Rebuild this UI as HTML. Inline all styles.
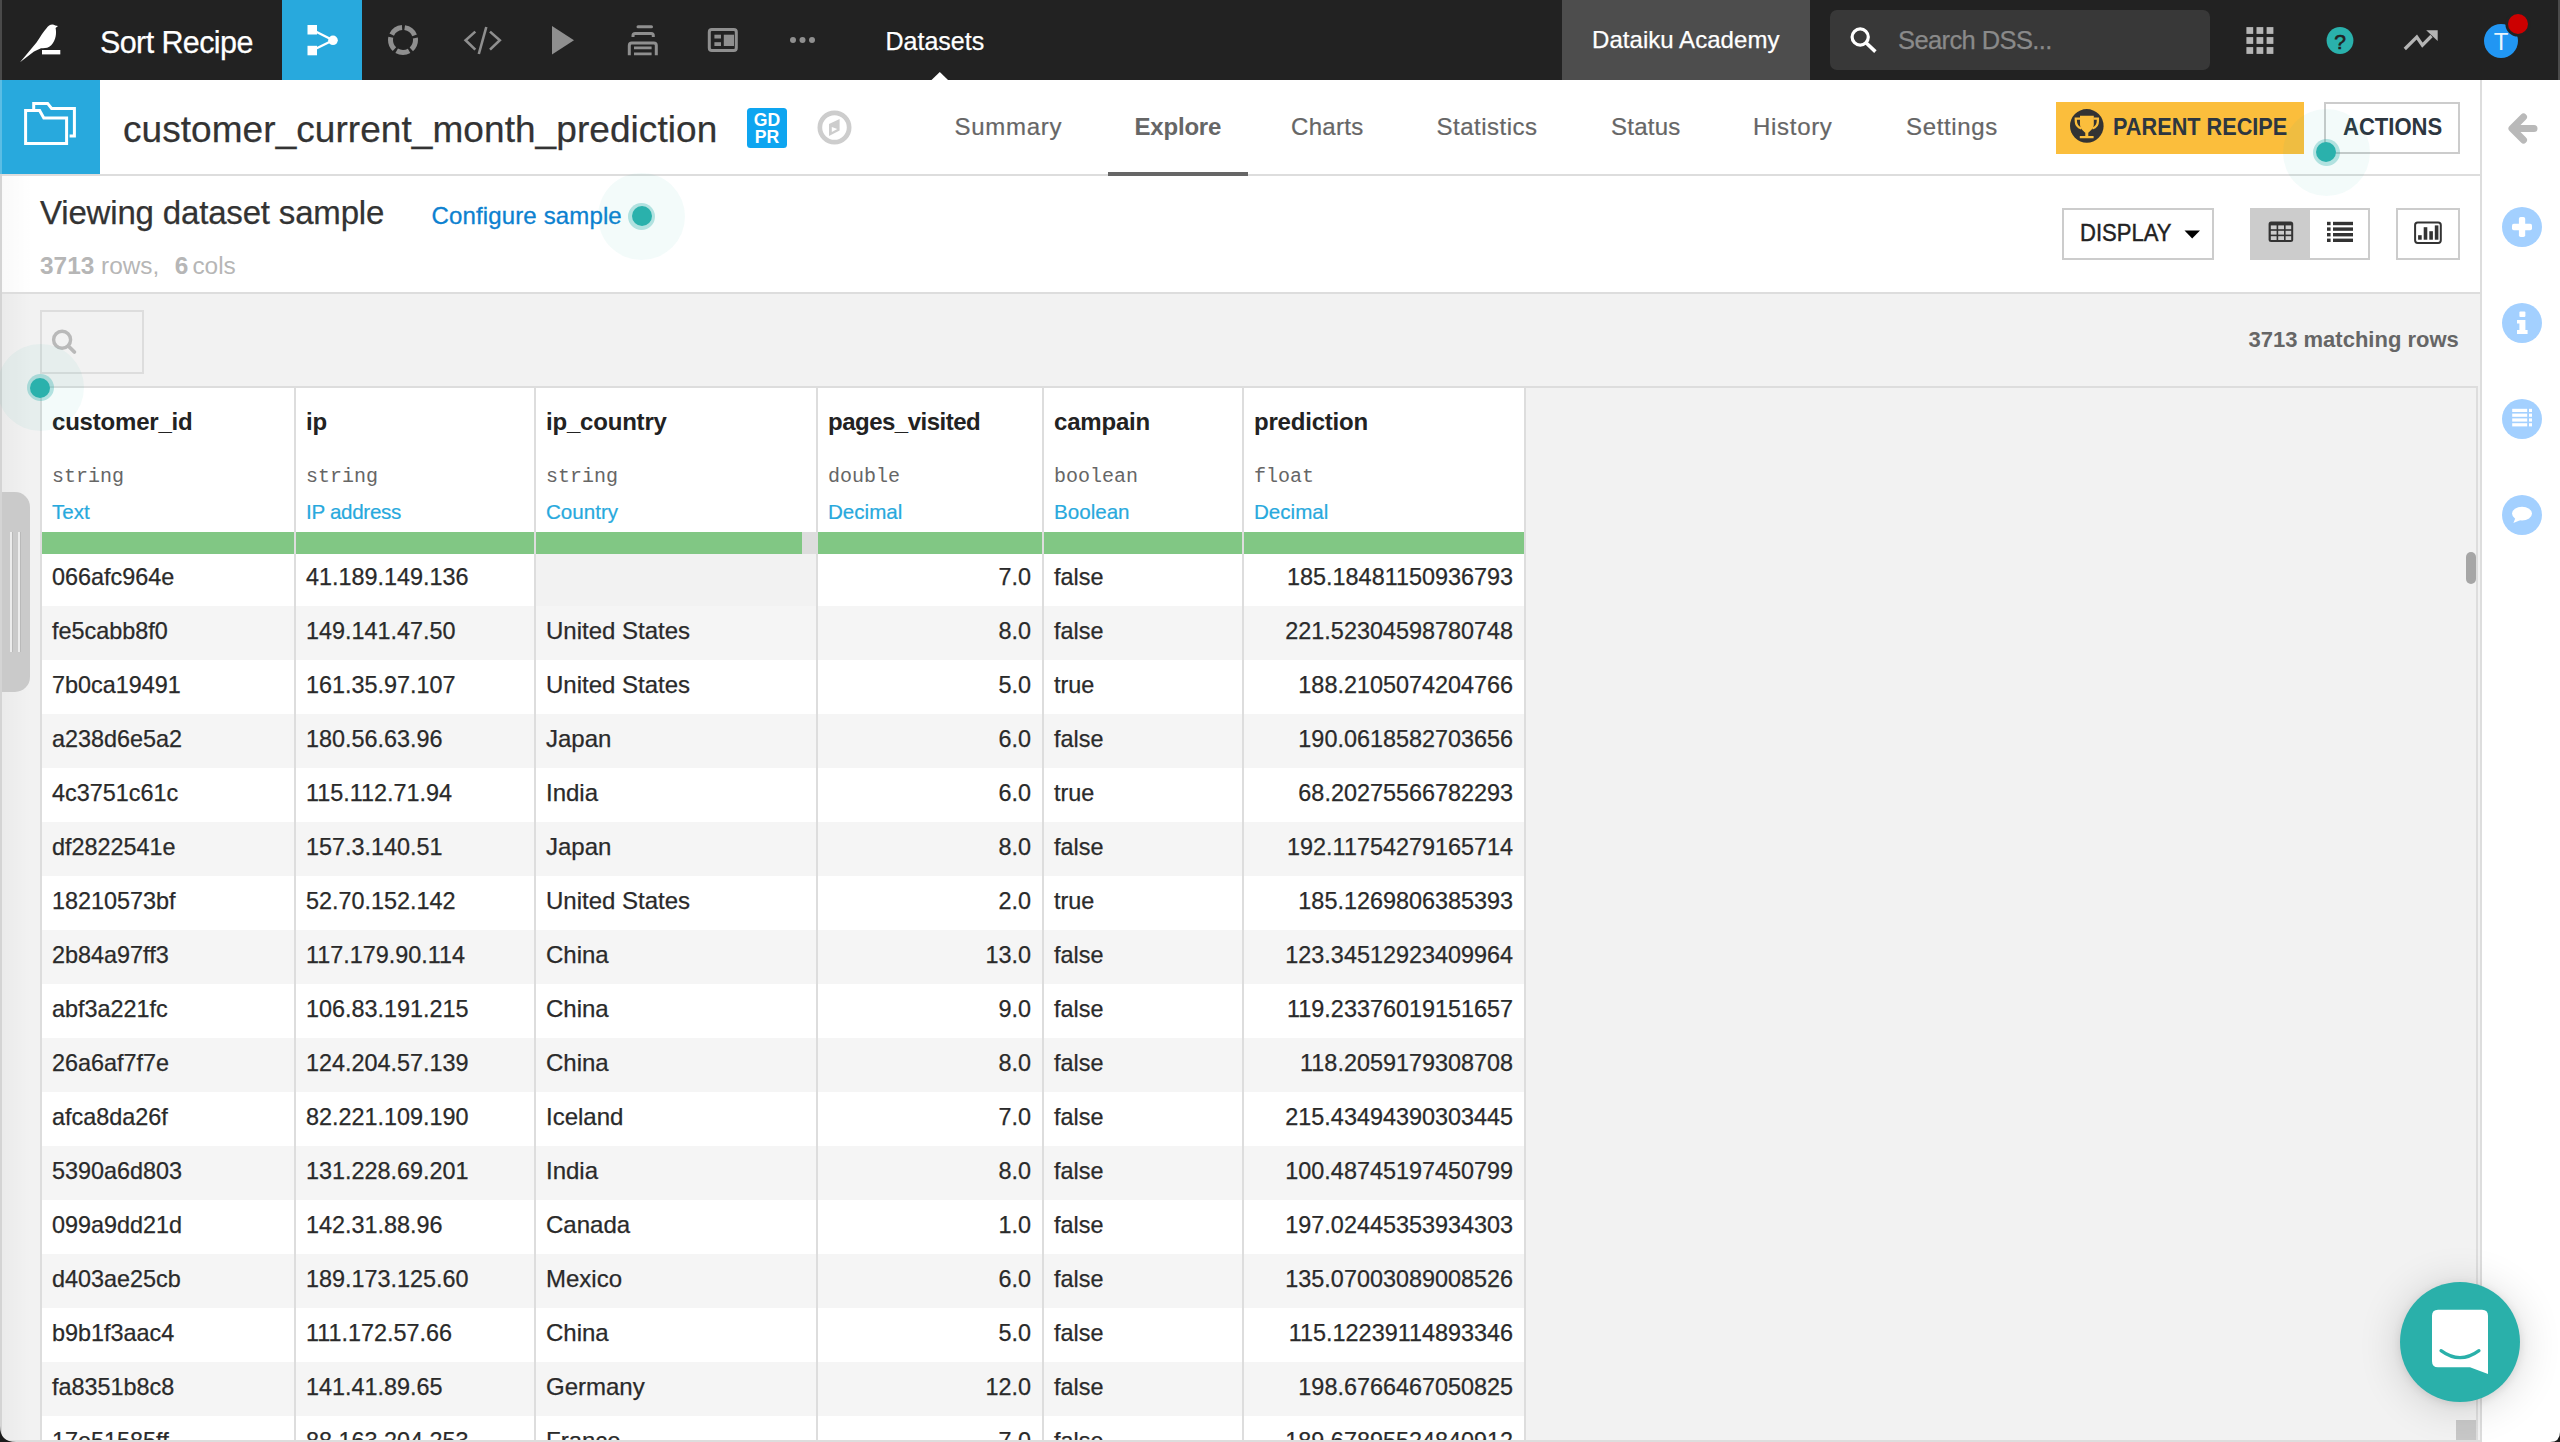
<!DOCTYPE html>
<html lang="en">
<head>
<meta charset="utf-8">
<title>customer_current_month_prediction - Explore</title>
<style>
*{box-sizing:border-box;margin:0;padding:0}
html,body{width:2560px;height:1442px;overflow:hidden;background:#f2f2f2;font-family:"Liberation Sans",sans-serif;color:#333}
.abs{position:absolute}
.t{position:absolute;white-space:nowrap;line-height:1}
.s{-webkit-text-stroke-width:.25px}
/* ---------- top bar ---------- */
#top{position:absolute;left:0;top:0;width:2560px;height:80px;background:#222}
#top .lstrip{position:absolute;left:0;top:0;width:2px;height:80px;background:#4a4a4a}
#top .rstrip{position:absolute;left:2558px;top:0;width:2px;height:80px;background:#4b4b4b}
#flowbtn{position:absolute;left:282px;top:0;width:80px;height:80px;background:#28a9dd}
#acad{position:absolute;left:1562px;top:0;width:248px;height:80px;background:#4d4d4d}
#search{position:absolute;left:1830px;top:10px;width:380px;height:60px;border-radius:7px;background:#383838}
/* ---------- sub header ---------- */
#sub{position:absolute;left:0;top:80px;width:2481px;height:96px;background:#fff;border-bottom:2px solid #ddd}
#dsicon{position:absolute;left:0;top:0;width:100px;height:94px;background:#28a9dd}
.tab{-webkit-text-stroke-width:.22px;position:absolute;white-space:nowrap;line-height:1;color:#666;font-size:24px;top:35.4px}
/* ---------- info ---------- */
#info{position:absolute;left:0;top:176px;width:2481px;height:118px;background:#fff;border-bottom:2px solid #ddd}
.btn{position:absolute;border:2px solid #ccc;background:#fff}
/* ---------- right panel ---------- */
#rp{position:absolute;left:2480px;top:80px;width:80px;height:1362px;background:#fff;border-left:2px solid #ddd}
.rc{position:absolute;left:20px;width:40px;height:40px;border-radius:50%;background:#a3d0ff}
/* ---------- table ---------- */
#grid{position:absolute;left:40px;top:386px;width:2438px;height:1056px;border-top:2px solid #ddd;border-left:2px solid #ddd;border-right:2px solid #ddd;background:#f2f2f2;overflow:hidden}
table{position:absolute;left:0;top:0;border-collapse:separate;border-spacing:0;table-layout:fixed;width:1484px}
td,th{border-right:2px solid #ddd;font-size:23.4px;font-weight:normal;text-align:left;white-space:nowrap;overflow:hidden}
th{height:164px;background:#fff;vertical-align:top;position:relative;padding:0}
td{-webkit-text-stroke-width:.25px;height:54px;line-height:27px;padding:0 11px 2.6px 10px;color:#2a2a2a}
tr.o td{background:#fff}
tr.e td{background:#f5f5f5}
td.n{text-align:right}
td.c{font-size:24px;padding-bottom:4.8px}
td.empty{background:#f2f2f2 !important}
th .nm{position:absolute;left:10px;top:22px;font-weight:bold;font-size:24px;letter-spacing:-.2px;line-height:1;color:#222}
th .ty{position:absolute;left:10px;top:79px;font-family:"Liberation Mono",monospace;font-size:20px;line-height:1;color:#666}
th .mn{-webkit-text-stroke-width:.2px;position:absolute;left:10px;top:114px;font-size:20.6px;line-height:1;color:#28a9dd}
.bar{position:absolute;top:144px;height:22px;background:#81c784}
.halo{position:absolute;width:87px;height:87px;border-radius:50%;background:rgba(42,177,172,.055)}
.halo i{position:absolute;left:30px;top:30px;width:27px;height:27px;border-radius:50%;background:rgba(42,177,172,.33)}
.halo b{position:absolute;left:33.5px;top:33.5px;width:20px;height:20px;border-radius:50%;background:#2ab1ac}
</style>
</head>
<body>
<div id="top">
  <div class="lstrip"></div><div class="rstrip"></div>
  <div class="t s" id="proj" style="left:100px;top:26.6px;font-size:30.5px;letter-spacing:-0.6px;color:#fff">Sort Recipe</div>
  <div id="flowbtn"></div>
  <svg class="abs" style="left:0;top:0" width="2560" height="80" viewBox="0 0 2560 80">
    <!-- bird logo -->
    <path fill="#fff" d="M20,62.3 L36.5,42.5 C40.5,36.5 43.5,31.5 46.5,28.3 C48.5,24.6 52.5,23.4 55.3,25.4 L58,26 L55.6,28 C56.6,33 56.2,40 51.2,45.3 C48.2,48.4 44,48.4 41,48.2 L34,51.6 Z"/>
    <rect fill="#fff" x="42" y="50" width="18.3" height="4.4"/>
    <!-- flow icon -->
    <g fill="#fff" stroke="#fff">
      <rect x="307.5" y="25" width="9.5" height="9.5" stroke="none"/>
      <rect x="307.5" y="45.8" width="9.5" height="9.5" stroke="none"/>
      <circle cx="333" cy="40.3" r="4.8" stroke="none"/>
      <path d="M312.2,29.7 L333,40.3 L312.2,50.5" fill="none" stroke-width="2.3"/>
    </g>
    <!-- ring -->
    <circle cx="403" cy="40" r="12.5" fill="none" stroke="#8f8f8f" stroke-width="5" stroke-dasharray="13 2.708" stroke-dashoffset="2.57"/>
    <!-- code -->
    <g fill="none" stroke="#8f8f8f" stroke-width="2.6">
      <path d="M475.3,31.6 L465.6,40.3 L475.3,49.6"/>
      <path d="M486.3,27 L478.8,54"/>
      <path d="M490,31.6 L499.8,40.3 L490,49.6"/>
    </g>
    <!-- play -->
    <path fill="#8f8f8f" d="M552,26 L574,40.3 L552,54.6 Z"/>
    <!-- stack -->
    <g fill="none" stroke="#8f8f8f" stroke-width="3">
      <path d="M638,26.8 L651.5,26.8" stroke-linecap="round"/>
      <path d="M633,37 L633,35.5 Q633,33.4 635.2,33.4 L651.2,33.4 Q653.3,33.4 653.3,35.5 L653.3,37"/>
      <path d="M629.3,55.3 L629.3,45.6 Q629.3,43.1 631.8,43.1 L653.8,43.1 Q656.3,43.1 656.3,45.6 L656.3,55.3"/>
      <path d="M634,47.8 L651.6,47.8 M634,53.9 L651.6,53.9" stroke-width="2.8"/>
    </g>
    <!-- dashboard -->
    <rect x="709.3" y="29.5" width="27" height="21" rx="2.5" fill="none" stroke="#8f8f8f" stroke-width="3"/>
    <g fill="#8f8f8f">
      <rect x="714.4" y="34.7" width="6.6" height="3.8"/>
      <rect x="714.4" y="42.2" width="6.6" height="3.8"/>
      <rect x="723.8" y="34.7" width="10.2" height="11.3"/>
      <circle cx="793" cy="40" r="3"/><circle cx="802.5" cy="40" r="3"/><circle cx="812" cy="40" r="3"/>
    </g>
    <!-- pointer -->
    <path fill="#fff" d="M931.5,80 L939.8,72 L948,80 Z"/>
  </svg>
  <div class="t s" id="dsets" style="left:885.5px;top:29px;font-size:25px;color:#fff">Datasets</div>
  <div id="acad"><div class="t s" id="acadt" style="left:30px;top:27.6px;font-size:24px;letter-spacing:0.05px;color:#fff">Dataiku Academy</div></div>
  <div id="search"><div class="t s" id="st" style="left:68px;top:17.9px;font-size:25.5px;letter-spacing:-0.6px;color:#8a8a8a">Search DSS...</div></div>
  <svg class="abs" style="left:1840px;top:0" width="720" height="80" viewBox="1840 0 720 80">
    <!-- search icon -->
    <circle cx="1860.2" cy="37" r="8.1" fill="none" stroke="#fff" stroke-width="3.2"/>
    <path d="M1866,42.8 L1875.4,51.6" stroke="#fff" stroke-width="3.6" fill="none"/>
    <!-- apps grid -->
    <g fill="#b5b5b5">
      <rect x="2246.4" y="27.1" width="6.8" height="6.8"/><rect x="2256.5" y="27.1" width="6.8" height="6.8"/><rect x="2266.6" y="27.1" width="6.8" height="6.8"/>
      <rect x="2246.4" y="37.1" width="6.8" height="6.8"/><rect x="2256.5" y="37.1" width="6.8" height="6.8"/><rect x="2266.6" y="37.1" width="6.8" height="6.8"/>
      <rect x="2246.4" y="47.1" width="6.8" height="6.8"/><rect x="2256.5" y="47.1" width="6.8" height="6.8"/><rect x="2266.6" y="47.1" width="6.8" height="6.8"/>
    </g>
    <!-- help -->
    <circle cx="2340" cy="40.5" r="13.4" fill="#2ab1ac"/>
    <text x="2340" y="48.6" text-anchor="middle" font-family="Liberation Sans, sans-serif" font-size="21" fill="#222" stroke="#222" stroke-width=".6">?</text>
    <!-- trend -->
    <path d="M2404.8,49 L2416.8,37 L2422.4,45.2 L2431.5,36" fill="none" stroke="#b5b5b5" stroke-width="3.2"/>
    <path d="M2426.2,30.2 L2437.7,30.2 L2437.7,41 Z" fill="#b5b5b5"/>
    <!-- avatar -->
    <circle cx="2501" cy="41" r="17" fill="#2196f3"/>
    <text x="2501" y="49.5" text-anchor="middle" font-family="Liberation Sans, sans-serif" font-size="24" fill="#fff" fill-opacity=".92">T</text>
    <circle cx="2518" cy="24" r="11.3" fill="#cc0000" stroke="#222" stroke-width="2.6"/>
  </svg>
</div>

<div id="sub">
  <div id="dsicon"></div>
  <div class="t s" id="title" style="left:123px;top:31px;font-size:37px;letter-spacing:0.06px;color:#333">customer_current_month_prediction</div>
  <svg class="abs" style="left:0;top:0" width="900" height="94" viewBox="0 80 900 94">
    <!-- folders icon -->
    <g fill="none" stroke="#fff" stroke-width="3" stroke-linejoin="miter">
      <path d="M33.7,109 L33.7,103.4 L47.6,103.4 L51.6,108.4 L74.4,108.4 L74.4,136 L69.6,136"/>
      <path d="M25.6,110.5 L39.6,110.5 L43.8,118 L66.6,118 L66.6,143.5 L25.6,143.5 Z"/>
    </g>
    <!-- gdpr badge -->
    <rect x="747" y="108" width="40" height="40" rx="3.5" fill="#0ea5f0"/>
    <text font-family="Liberation Sans, sans-serif" font-weight="bold" font-size="17.6" fill="#fff" text-anchor="middle"><tspan x="767" y="126.3">GD</tspan><tspan x="767" y="143.3">PR</tspan></text>
    <!-- compass -->
    <circle cx="834.5" cy="127.5" r="14.65" fill="none" stroke="#cdcdcd" stroke-width="4.7"/>
    <path d="M829,124.1 L839.6,119.1 L839.6,130.5 L829,136.1 Z M831.8,127 L837.3,129.1 L831.8,132 Z" fill="#cdcdcd" fill-rule="evenodd"/>
  </svg>
  <div class="abs" id="parent" style="left:2056px;top:22px;width:248px;height:52px;background:#fbbe3c">
    <svg class="abs" style="left:13px;top:7px" width="36" height="36" viewBox="0 0 36 36">
      <circle cx="17.8" cy="16.9" r="16.8" fill="#333"/>
      <g transform="translate(17.8,16.9)" fill="#fbbe3c">
        <path d="M-6.8,-10.2 L7,-10.2 L7,-1.5 C7,2.2 3.8,4.6 1.5,6.8 L1.5,10 L6.8,10 L6.8,12.4 L-7,12.4 L-7,10 L-1.5,10 L-1.5,6.8 C-3.8,4.6 -6.8,2.2 -6.8,-1.5 Z"/>
        <path d="M-6.4,-7.3 L-11,-7.3 L-11,-5 C-11,-1 -9,1.4 -5.4,2.6" fill="none" stroke="#fbbe3c" stroke-width="2.3"/>
        <path d="M6.6,-7.3 L11.1,-7.3 L11.1,-5 C11.1,-1 9.2,1.4 5.6,2.6" fill="none" stroke="#fbbe3c" stroke-width="2.3"/>
      </g>
    </svg>
    <div class="t" id="prt" style="left:57px;top:13.2px;font-size:24.5px;font-weight:bold;color:#2d3640;transform:scaleX(.885);transform-origin:0 0">PARENT RECIPE</div>
  </div>
  <div class="btn" id="actions" style="left:2324px;top:22px;width:136px;height:52px">
    <div class="t" id="actt" style="left:16.5px;top:11.3px;font-size:24.5px;font-weight:bold;color:#2d3640;transform:scaleX(.9);transform-origin:0 0">ACTIONS</div>
  </div>
  <div class="tab" style="left:954.5px;letter-spacing:.7px">Summary</div>
  <div class="tab" style="left:1134.5px;font-weight:bold;-webkit-text-stroke-width:0;letter-spacing:-.2px">Explore</div>
  <div class="tab" style="left:1291px;letter-spacing:.3px">Charts</div>
  <div class="tab" style="left:1436.5px;letter-spacing:.5px">Statistics</div>
  <div class="tab" style="left:1611px;letter-spacing:.25px">Status</div>
  <div class="tab" style="left:1753px;letter-spacing:.7px">History</div>
  <div class="tab" style="left:1906px;letter-spacing:.65px">Settings</div>
  <div class="abs" style="left:1108px;top:92px;width:140px;height:4px;background:#666"></div>
</div>

<div id="info">
  <div class="t s" id="vds" style="left:40px;top:19.7px;font-size:33px;letter-spacing:-0.17px;color:#333">Viewing dataset sample</div>
  <div class="t" id="cfg" style="left:431.5px;top:28.2px;font-size:24px;letter-spacing:0.14px;color:#0c81d0;-webkit-text-stroke:.3px #0c81d0">Configure sample</div>
  <div class="t" id="rc" style="left:40px;top:78.1px;font-size:24.4px;color:#b6b6b6"><b>3713</b> rows,<span style="display:inline-block;width:15.4px"></span><b>6</b><span style="margin-left:-2.7px"> cols</span></div>
  <div class="btn" id="display" style="left:2062px;top:32px;width:152px;height:52px">
    <div class="t" id="dispt" style="left:15.5px;top:11.2px;font-size:24.5px;color:#222;-webkit-text-stroke:.45px #222;transform:scaleX(.9);transform-origin:0 0">DISPLAY</div>
    <svg class="abs" style="left:120px;top:20px" width="18" height="10" viewBox="0 0 18 10"><path d="M0.5,0.5 L16,0.5 L8.2,8.4 Z" fill="#000"/></svg>
  </div>
  <div class="btn" style="left:2250px;top:32px;width:120px;height:52px">
    <div class="abs" style="left:-2px;top:-2px;width:60px;height:52px;background:#ccc"></div>
    <svg class="abs" style="left:-2px;top:-2px" width="120" height="52" viewBox="2250 208 120 52">
      <!-- table icon -->
      <rect x="2268.6" y="221.6" width="24.6" height="20.4" rx="2.5" fill="#333"/>
      <g fill="#ccc">
        <rect x="2270.8" y="225.4" width="5.8" height="3.8"/><rect x="2278.2" y="225.4" width="5.8" height="3.8"/><rect x="2285.6" y="225.4" width="5.6" height="3.8"/>
        <rect x="2270.8" y="230.8" width="5.8" height="3.8"/><rect x="2278.2" y="230.8" width="5.8" height="3.8"/><rect x="2285.6" y="230.8" width="5.6" height="3.8"/>
        <rect x="2270.8" y="236.2" width="5.8" height="3.8"/><rect x="2278.2" y="236.2" width="5.8" height="3.8"/><rect x="2285.6" y="236.2" width="5.6" height="3.8"/>
      </g>
      <!-- list icon -->
      <g fill="#333">
        <rect x="2327" y="221.8" width="3.6" height="3.4"/><rect x="2333" y="221.8" width="20" height="3.4"/>
        <rect x="2327" y="227.4" width="3.6" height="3.4"/><rect x="2333" y="227.4" width="20" height="3.4"/>
        <rect x="2327" y="233" width="3.6" height="3.4"/><rect x="2333" y="233" width="20" height="3.4"/>
        <rect x="2327" y="238.6" width="3.6" height="3.4"/><rect x="2333" y="238.6" width="20" height="3.4"/>
      </g>
    </svg>
  </div>
  <div class="btn" style="left:2396px;top:32px;width:64px;height:52px">
    <svg class="abs" style="left:-2px;top:-2px" width="64" height="52" viewBox="2396 208 64 52">
      <rect x="2415.1" y="222.4" width="25.7" height="20.5" rx="2.6" fill="none" stroke="#333" stroke-width="2"/>
      <g fill="#333">
        <rect x="2418.1" y="235.2" width="3.6" height="4.5"/><rect x="2423.7" y="227.2" width="3.6" height="12.5"/>
        <rect x="2429.3" y="231.2" width="3.6" height="8.5"/><rect x="2434.8" y="225.4" width="3.6" height="14.3"/>
      </g>
    </svg>
  </div>
</div>

<div id="rp">
  <svg class="abs" style="left:0;top:0" width="78" height="480" viewBox="2482 80 78 480">
    <path d="M2534,128.5 L2513,128.5 M2523.5,117 L2512,128.5 L2523.5,140" fill="none" stroke="#b9b9b9" stroke-width="7" stroke-linecap="round" stroke-linejoin="round"/>
    <g fill="#a3d0ff"><circle cx="2522" cy="227" r="20"/><circle cx="2522" cy="323" r="20"/><circle cx="2522" cy="419" r="20"/><circle cx="2522" cy="515" r="20"/></g>
    <!-- plus -->
    <rect x="2512" y="223.8" width="20" height="6.4" rx="1.8" fill="#fff"/><rect x="2518.9" y="217" width="6.3" height="20" rx="1.8" fill="#fff"/>
    <!-- info i -->
    <g fill="#fff"><rect x="2519.4" y="311.6" width="6" height="5.4" rx="1"/><path d="M2517,320 L2525.4,320 L2525.4,330 L2527.6,330 L2527.6,334 L2517,334 L2517,330 L2519.4,330 L2519.4,323.6 L2517,323.6 Z"/></g>
    <!-- list -->
    <g fill="#fff">
      <rect x="2512.2" y="408.8" width="15" height="3.2"/><rect x="2529" y="408.8" width="3" height="3.2"/>
      <rect x="2512.2" y="413.6" width="15" height="3.2"/><rect x="2529" y="413.6" width="3" height="3.2"/>
      <rect x="2512.2" y="418.4" width="15" height="3.2"/><rect x="2529" y="418.4" width="3" height="3.2"/>
      <rect x="2512.2" y="423.2" width="15" height="3.2"/><rect x="2529" y="423.2" width="3" height="3.2"/>
    </g>
    <!-- comment -->
    <ellipse cx="2522" cy="513.6" rx="10" ry="6.9" fill="#fff"/>
    <path d="M2515.6,517.4 L2513.4,523 L2520.6,520 Z" fill="#fff"/>
  </svg>
</div>

<!--grid-->
<div id="grid">
<table>
<colgroup>
<col style="width:254px">
<col style="width:240px">
<col style="width:282px">
<col style="width:226px">
<col style="width:200px">
<col style="width:282px">
</colgroup>
<tr>
<th><span class="nm">customer_id</span><span class="ty">string</span><span class="mn">Text</span></th>
<th><span class="nm">ip</span><span class="ty">string</span><span class="mn" style="letter-spacing:-.3px">IP address</span></th>
<th><span class="nm">ip_country</span><span class="ty">string</span><span class="mn">Country</span></th>
<th><span class="nm" style="letter-spacing:-.5px">pages_visited</span><span class="ty">double</span><span class="mn">Decimal</span></th>
<th><span class="nm">campain</span><span class="ty">boolean</span><span class="mn">Boolean</span></th>
<th><span class="nm">prediction</span><span class="ty">float</span><span class="mn">Decimal</span></th>
</tr>
<tr class="o first"><td>066afc964e</td><td>41.189.149.136</td><td class="c empty"></td><td class="n">7.0</td><td>false</td><td class="n">185.18481150936793</td></tr>
<tr class="e"><td>fe5cabb8f0</td><td>149.141.47.50</td><td class="c">United States</td><td class="n">8.0</td><td>false</td><td class="n">221.52304598780748</td></tr>
<tr class="o"><td>7b0ca19491</td><td>161.35.97.107</td><td class="c">United States</td><td class="n">5.0</td><td>true</td><td class="n">188.2105074204766</td></tr>
<tr class="e"><td>a238d6e5a2</td><td>180.56.63.96</td><td class="c">Japan</td><td class="n">6.0</td><td>false</td><td class="n">190.0618582703656</td></tr>
<tr class="o"><td>4c3751c61c</td><td>115.112.71.94</td><td class="c">India</td><td class="n">6.0</td><td>true</td><td class="n">68.20275566782293</td></tr>
<tr class="e"><td>df2822541e</td><td>157.3.140.51</td><td class="c">Japan</td><td class="n">8.0</td><td>false</td><td class="n">192.11754279165714</td></tr>
<tr class="o"><td>18210573bf</td><td>52.70.152.142</td><td class="c">United States</td><td class="n">2.0</td><td>true</td><td class="n">185.1269806385393</td></tr>
<tr class="e"><td>2b84a97ff3</td><td>117.179.90.114</td><td class="c">China</td><td class="n">13.0</td><td>false</td><td class="n">123.34512923409964</td></tr>
<tr class="o"><td>abf3a221fc</td><td>106.83.191.215</td><td class="c">China</td><td class="n">9.0</td><td>false</td><td class="n">119.23376019151657</td></tr>
<tr class="e"><td>26a6af7f7e</td><td>124.204.57.139</td><td class="c">China</td><td class="n">8.0</td><td>false</td><td class="n">118.2059179308708</td></tr>
<tr class="o"><td>afca8da26f</td><td>82.221.109.190</td><td class="c">Iceland</td><td class="n">7.0</td><td>false</td><td class="n">215.43494390303445</td></tr>
<tr class="e"><td>5390a6d803</td><td>131.228.69.201</td><td class="c">India</td><td class="n">8.0</td><td>false</td><td class="n">100.48745197450799</td></tr>
<tr class="o"><td>099a9dd21d</td><td>142.31.88.96</td><td class="c">Canada</td><td class="n">1.0</td><td>false</td><td class="n">197.02445353934303</td></tr>
<tr class="e"><td>d403ae25cb</td><td>189.173.125.60</td><td class="c">Mexico</td><td class="n">6.0</td><td>false</td><td class="n">135.07003089008526</td></tr>
<tr class="o"><td>b9b1f3aac4</td><td>111.172.57.66</td><td class="c">China</td><td class="n">5.0</td><td>false</td><td class="n">115.12239114893346</td></tr>
<tr class="e"><td>fa8351b8c8</td><td>141.41.89.65</td><td class="c">Germany</td><td class="n">12.0</td><td>false</td><td class="n">198.6766467050825</td></tr>
<tr class="o"><td>17e51585ff</td><td>88.163.204.253</td><td class="c">France</td><td class="n">7.0</td><td>false</td><td class="n">189.67895524840912</td></tr>
</table>
<i class="bar" style="left:0px;width:252px"></i>
<i class="bar" style="left:254px;width:238px"></i>
<i class="bar" style="left:494px;width:280px"></i>
<i class="bar" style="left:760px;width:14px;background:#ddd"></i>
<i class="bar" style="left:776px;width:224px"></i>
<i class="bar" style="left:1002px;width:198px"></i>
<i class="bar" style="left:1202px;width:280px"></i>
</div>
<!--/grid-->

<!-- filter box + matching rows -->
<div class="abs" style="left:40px;top:310px;width:104px;height:64px;border:2px solid #ddd">
  <svg class="abs" style="left:9px;top:14px" width="30" height="30" viewBox="51 326 30 30">
    <circle cx="62.1" cy="339.8" r="8.5" fill="none" stroke="#b9b9b9" stroke-width="3.4"/>
    <path d="M68.3,346 L74.4,352" stroke="#b9b9b9" stroke-width="3.8" stroke-linecap="round"/>
  </svg>
</div>
<div class="t" id="match" style="left:2248.5px;top:329.3px;font-size:22px;font-weight:bold;color:#666">3713 matching rows</div>

<!-- scrollbar bits -->
<div class="abs" style="left:2466px;top:552px;width:10px;height:32px;border-radius:5px;background:#a6a6a6"></div>
<div class="abs" style="left:2456px;top:1420px;width:20px;height:20px;background:#c8c8c8"></div>

<!-- left handle -->
<div class="abs" style="left:0;top:80px;width:2px;height:94px;background:#5bbde4"></div>
<div class="abs" style="left:0;top:174px;width:2px;height:1268px;background:#d4d4d4"></div>
<div class="abs" style="left:2px;top:176px;width:30px;height:116px;background:linear-gradient(90deg,rgba(0,0,0,.025),rgba(0,0,0,0))"></div>
<div class="abs" style="left:2px;top:294px;width:30px;height:1146px;background:linear-gradient(90deg,rgba(0,0,0,.03),rgba(0,0,0,0))"></div>
<div class="abs" style="left:2px;top:492px;width:28px;height:200px;border-radius:0 15px 15px 0;background:#cacaca">
  <div class="abs" style="left:8px;top:40px;width:2px;height:120px;background:#ececec"></div>
  <div class="abs" style="left:10px;top:40px;width:1px;height:120px;background:#b9b9b9"></div>
  <div class="abs" style="left:16px;top:40px;width:2px;height:120px;background:#ececec"></div>
  <div class="abs" style="left:18px;top:40px;width:1px;height:120px;background:#b9b9b9"></div>
</div>

<!-- tour dots -->
<div class="halo" style="left:2282.5px;top:108.5px"><i></i><b></b></div>
<div class="halo" style="left:598px;top:172.5px"><i></i><b></b></div>
<div class="halo" style="left:-3.5px;top:344.4px"><i></i><b></b></div>

<!-- chat widget -->
<div class="abs" style="left:2400px;top:1282px;width:120px;height:120px;border-radius:50%;background:#2ab0aa;box-shadow:0 4px 44px rgba(0,0,0,.16),0 2px 10px rgba(0,0,0,.10)">
  <svg class="abs" style="left:0;top:0" width="120" height="120" viewBox="2400 1282 120 120">
    <path d="M2438,1309.8 L2482,1309.8 Q2488,1309.8 2488,1315.8 L2488,1374 L2470,1367.2 L2438,1367.2 Q2432,1367.2 2432,1361.2 L2432,1315.8 Q2432,1309.8 2438,1309.8 Z" fill="#fff"/>
    <path d="M2441,1350.6 Q2460,1364.6 2479,1350.6" fill="none" stroke="#2ab0aa" stroke-width="3.2" stroke-linecap="round"/>
  </svg>
</div>

<!-- window edge -->
<div class="abs" style="left:0;top:1440px;width:2480px;height:2px;background:#ddd"></div>
<svg class="abs" style="left:0;top:1426px" width="16" height="16" viewBox="0 0 16 16"><path d="M0,0 L0,16 L16,16 Q0,16 0,0 Z" fill="#1b1b1b"/></svg>
<svg class="abs" style="left:2550px;top:1432px" width="10" height="10" viewBox="0 0 16 16"><path d="M16,0 L16,16 L0,16 Q16,16 16,0 Z" fill="#1b1b1b"/></svg>
</body>
</html>
